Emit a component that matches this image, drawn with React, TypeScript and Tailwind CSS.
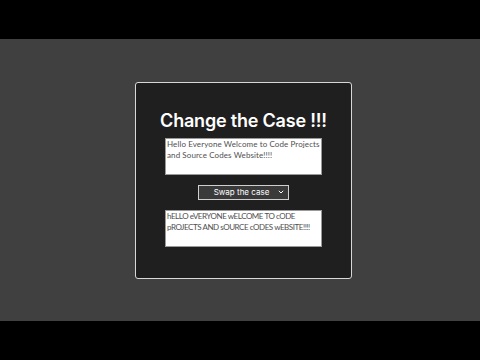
import { useState } from 'react';

const swapCase = (s: string) =>
  s
    .split('')
    .map(c => (c === c.toUpperCase() ? c.toLowerCase() : c.toUpperCase()))
    .join('');

export default function App() {
  const [text, setText] = useState('Hello Everyone Welcome to Code Projects and Source Codes Website!!!!');

  return (
    <div className="w-[480px] h-[360px] bg-black flex flex-col" style={{ fontFamily: 'Inter, "Noto Sans", sans-serif' }}>
      <div className="h-[39px] shrink-0" />
      <div className="h-[282px] bg-[#404040] flex items-center justify-center pl-[7px]">
        <div className="w-[217px] h-[197px] bg-[#1f1f1f] border border-[#d8d8d8] rounded-[3px] flex flex-col items-center pt-[27px]">
          <h1 className="text-white text-[18px] font-semibold leading-[22px] tracking-[-0.2px]">Change the Case !!!</h1>
          <textarea
            spellCheck={false}
            value={text}
            onChange={e => setText(e.target.value)}
            className="mt-[6px] w-[157px] h-[37px] bg-white border border-[#9a9a9a] text-[#505050] text-[8px] leading-[11px] tracking-[0.1px] px-[1px] py-0 resize-none outline-none overflow-hidden"
            style={{ fontFamily: 'Lato, sans-serif' }}
          />
          <div className="mt-[10px] w-[91px] h-[15px] bg-[#3a3a3a] border border-[#cfcfcf] flex items-center text-white text-[8px]">
            <span className="flex-1 text-center pl-[6px]">Swap the case</span>
            <svg width="6" height="4" viewBox="0 0 6 4" className="mr-[4px]">
              <path d="M0.8 0.8 L3 3 L5.2 0.8" fill="none" stroke="#fff" strokeWidth="1" />
            </svg>
          </div>
          <textarea
            spellCheck={false}
            readOnly
            value={swapCase(text)}
            className="mt-[10px] w-[157px] h-[37px] bg-white border border-[#9a9a9a] text-[#505050] text-[8px] leading-[11px] tracking-[-0.45px] px-[1px] py-0 resize-none outline-none overflow-hidden"
            style={{ fontFamily: 'Lato, sans-serif' }}
          />
        </div>
      </div>
      <div className="h-[39px] shrink-0" />
    </div>
  );
}
